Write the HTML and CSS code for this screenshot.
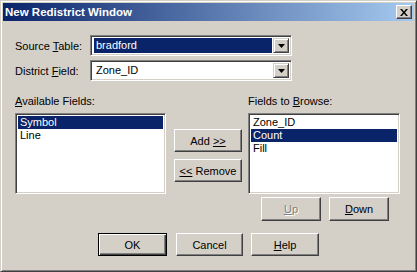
FILE: index.html
```html
<!DOCTYPE html>
<html lang="en">
<head>
    <meta charset="UTF-8">
    <title>New Redistrict Window</title>
    <link rel="stylesheet" href="styles.css">
</head>
<body>
    <div class="window">
        <div class="titlebar">
            <span class="title">New Redistrict Window</span>
            <button class="close-btn" aria-label="Close">
                <svg width="8" height="7" viewBox="0 0 8 7"><path d="M0 0h2l2 2.5 2-2.5h2l-3 3.5 3 3.5h-2l-2-2.5-2 2.5h-2l3-3.5z" fill="#000"/></svg>
            </button>
        </div>

        <div class="content">
            <div class="field-row">
                <label class="field-label">Source <u>T</u>able:</label>
                <div class="combo">
                    <div class="combo-text"><span class="sel">bradford</span></div>
                    <div class="combo-arrow"><svg width="7" height="4" viewBox="0 0 7 4"><path d="M0 0h7l-3.5 4z" fill="#000"/></svg></div>
                </div>
            </div>
            <div class="field-row">
                <label class="field-label">District <u>F</u>ield:</label>
                <div class="combo">
                    <div class="combo-text"><span>Zone_ID</span></div>
                    <div class="combo-arrow"><svg width="7" height="4" viewBox="0 0 7 4"><path d="M0 0h7l-3.5 4z" fill="#000"/></svg></div>
                </div>
            </div>

            <div class="lists">
                <div class="list-label"><u>A</u>vailable Fields:</div>
                <div></div>
                <div class="list-label">Fields to <u>B</u>rowse:</div>

                <ul class="listbox">
                    <li class="selected">Symbol</li>
                    <li>Line</li>
                </ul>
                <div class="move-btns">
                    <button class="btn">Add <u>&gt;&gt;</u></button>
                    <button class="btn"><u>&lt;&lt;</u> Remove</button>
                </div>
                <ul class="listbox">
                    <li>Zone_ID</li>
                    <li class="selected">Count</li>
                    <li>Fill</li>
                </ul>

                <div class="order-btns">
                    <button class="btn small disabled"><u>U</u>p</button>
                    <button class="btn small"><u>D</u>own</button>
                </div>
            </div>

            <div class="dialog-btns">
                <button class="btn default ok">OK</button>
                <button class="btn cancel">Cancel</button>
                <button class="btn help"><u>H</u>elp</button>
            </div>
        </div>
    </div>
</body>
</html>
```

FILE: styles.css
```css
body { margin: 0; background: #d4d0c8; font-family: "Liberation Sans", Arial, sans-serif; font-size: 11px; color: #000; }
u { text-decoration: underline; text-underline-offset: 1px; }

.window { width: 417px; height: 272px; box-sizing: border-box; background: #d4d0c8; padding: 2px; border: 1px solid; border-color: #d4d0c8 #404040 #404040 #d4d0c8; box-shadow: inset 1px 1px #fff, inset -1px -1px #808080; }

.titlebar { height: 18px; display: flex; align-items: center; justify-content: space-between; padding: 0 2px 0 2px; background: linear-gradient(to right, #0a246a, #a6caf0); }
.title { color: #fff; font-weight: bold; font-size: 11.5px; padding-left: 0; }
.close-btn { width: 16px; height: 14px; padding: 0; display: flex; align-items: center; justify-content: center; background: #d4d0c8; border: 1px solid; border-color: #fff #404040 #404040 #fff; box-shadow: inset -1px -1px #808080; }

.content { padding: 14px 0 0 12px; }

.field-row { display: flex; align-items: center; height: 21px; margin-bottom: 4px; }
.field-label { width: 75px; }
.combo { width: 202px; height: 21px; box-sizing: border-box; display: flex; background: #fff; border: 1px solid; border-color: #808080 #fff #fff #808080; box-shadow: inset 1px 1px #404040, inset -1px -1px #d4d0c8; padding: 2px 2px 2px 2px; }
.combo-text { flex: 1; display: flex; align-items: center; padding: 0 1px; }
.combo-text span { display: block; flex: 1; padding: 1px 2px; line-height: 13px; }
.combo-text .sel { background: #0a246a; color: #fff; align-self: stretch; display: flex; align-items: center; }
.combo-arrow { width: 16px; box-sizing: border-box; display: flex; align-items: center; justify-content: center; background: #d4d0c8; border: 1px solid; border-color: #d4d0c8 #404040 #404040 #d4d0c8; box-shadow: inset 1px 1px #fff, inset -1px -1px #808080; }

.lists { display: grid; grid-template-columns: 151px 82px 152px; margin-top: 14px; }
.list-label { line-height: 13px; margin-bottom: 5px; }
.listbox { list-style: none; margin: 0; height: 81px; box-sizing: border-box; background: #fff; border: 1px solid; border-color: #808080 #fff #fff #808080; box-shadow: inset 1px 1px #404040, inset -1px -1px #d4d0c8; padding: 2px; }
.listbox li { line-height: 13px; padding-left: 2px; }
.listbox .selected { background: #0a246a; color: #fff; }

.move-btns { display: flex; flex-direction: column; gap: 7px; padding: 16px 0 0 8px; }
.move-btns .btn { width: 68px; }

.btn { height: 23px; box-sizing: border-box; padding: 0; font-family: "Liberation Sans", Arial, sans-serif; font-size: 11px; color: #000; background: #d4d0c8; border: 1px solid; border-color: #fff #404040 #404040 #fff; box-shadow: inset -1px -1px #808080; }
.btn.default { border-color: #000; box-shadow: inset 1px 1px #fff, inset -1px -1px #404040, inset -2px -2px #808080; }
.btn.disabled { color: #808080; text-shadow: 1px 1px #fff; }

.order-btns { grid-column: 3; display: flex; gap: 8px; padding: 3px 0 0 13px; }
.order-btns .btn { width: 60px; height: 24px; }

.dialog-btns { display: flex; padding: 12px 0 0 83px; }
.ok { width: 69px; }
.cancel { width: 67px; margin-left: 9px; }
.help { width: 68px; margin-left: 8px; }
```
